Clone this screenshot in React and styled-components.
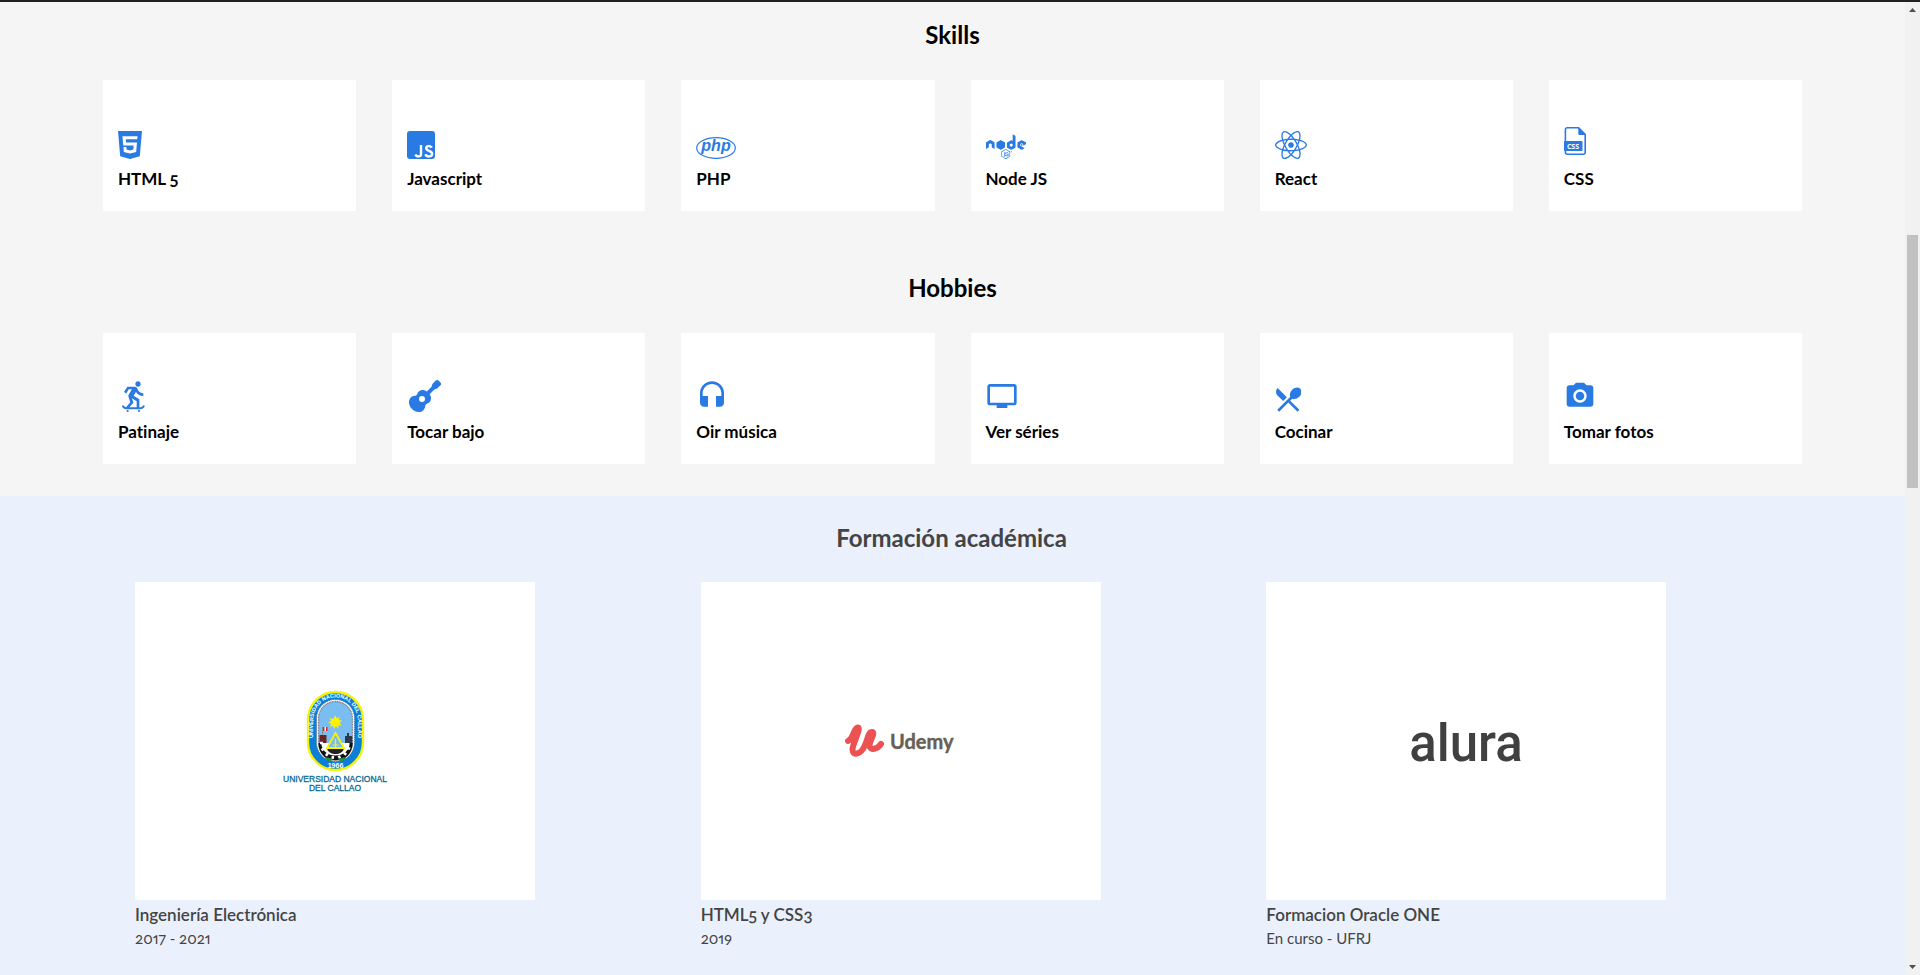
import React from "react";
import styled, { createGlobalStyle } from "styled-components";
import { FaNode, FaReact, FaGuitar } from "react-icons/fa";
import { MdSkateboarding, MdHeadset, MdPersonalVideo, MdRestaurantMenu, MdPhotoCamera } from "react-icons/md";

const BLUE = "#2a7ae4";

const GlobalStyle = createGlobalStyle`
  *, *::before, *::after { box-sizing: border-box; }
  body {
    margin: 0;
    font-family: Lato, "Open Sans", sans-serif;
    font-variant-numeric: oldstyle-nums proportional-nums;
    font-variant-ligatures: none;
    color: #000;
    background: #eaf1fd;
  }
  h2, h3, p, ul { margin: 0; padding: 0; }
  ul { list-style: none; }
`;

const Page = styled.div`
  display: flex;
  flex-direction: column;
  min-height: 100vh;
  border-top: 2px solid #231f20;
`;

const Viewport = styled.div`
  flex: 1;
  display: grid;
  grid-template-columns: minmax(0, 1fr) 15px;
`;

const Main = styled.main`
  display: flex;
  flex-direction: column;
`;

const Interests = styled.div`
  display: flex;
  flex-direction: column;
  gap: 60px;
  padding: 16px 103px 32px;
  background: #f5f5f5;
`;

const Title = styled.h2`
  margin-bottom: ${(p) => p.$gap}px;
  font-size: 24px;
  line-height: 34px;
  font-weight: 700;
  text-align: center;
`;

const TileGrid = styled.ul`
  display: grid;
  grid-template-columns: repeat(6, minmax(0, 1fr));
  gap: 36px;
`;

const Tile = styled.li`
  display: flex;
  flex-direction: column;
  justify-content: flex-end;
  align-items: flex-start;
  gap: 10px;
  height: 131px;
  padding: 0 14px 22px 15px;
  background: #fff;
  color: ${BLUE};

  svg { display: block; }
`;

const TileName = styled.h3`
  font-size: 17px;
  line-height: 20px;
  font-weight: 700;
  color: #000;
`;

const Education = styled.section`
  flex: 1;
  padding: 25px 105px 29px 103px;
  background: #eaf1fd;
  color: #444;
`;

const CourseGrid = styled.ul`
  display: grid;
  grid-template-columns: repeat(3, minmax(0, 1fr));
`;

const Course = styled.li`
  display: flex;
  flex-direction: column;
  padding-left: 32px;
`;

const LogoPanel = styled.div`
  display: flex;
  align-items: center;
  justify-content: center;
  width: 100%;
  max-width: 400px;
  height: 318px;
  background: #fff;
`;

const CourseName = styled.h3`
  font-size: 17px;
  line-height: 30px;
  font-weight: 600;
`;

const CourseDate = styled.p`
  font-size: 15px;
  line-height: 16px;
`;

const ScrollRail = styled.aside`
  position: sticky;
  top: 0;
  display: flex;
  flex-direction: column;
  height: calc(100vh - 2px);
  background: #f1f1f1;
`;

const ScrollArrow = styled.button`
  display: flex;
  align-items: center;
  justify-content: center;
  height: 16px;
  padding: 0;
  border: 0;
  background: none;
  color: #505050;
`;

const ScrollTrack = styled.div`
  flex: 1;
  display: grid;
  grid-template-rows: 217fr 253fr 471fr;
  padding: 0 2px;
`;

const ScrollThumb = styled.div`
  grid-row: 2;
  background: #c1c1c1;
`;

const Html5Icon = () => (
  <svg width="24" height="28" viewBox="1.5 0 21 24" preserveAspectRatio="none" fill="currentColor" aria-hidden="true">
    <path d="M1.5 0h21l-1.91 21.563L11.977 24l-8.564-2.438L1.5 0zm7.031 9.75l-.232-2.718 10.059.003.23-2.622L5.412 4.41l.698 8.01h9.126l-.326 3.426-2.91.804-2.955-.81-.188-2.11H6.248l.33 4.171L12 19.351l5.379-1.443.744-8.157H8.531z" />
  </svg>
);

const JsIcon = () => (
  <svg width="28" height="28" viewBox="0 0 28 28" aria-hidden="true">
    <rect width="28" height="28" rx="3" fill="currentColor" />
    <g fill="none" stroke="#fff" strokeWidth="2.4">
      <path d="M14 14v9.2c0 2.6-4.4 3.2-5.6.3" />
      <path d="M24.8 16.6c-1.3-2.2-5.6-2-5.6.7 0 3 6 2 6 5.5 0 3.2-5.4 3.6-7 .6" />
    </g>
  </svg>
);

const PhpIcon = () => (
  <svg width="40" height="22" viewBox="0 0 40 22" aria-hidden="true">
    <ellipse cx="20" cy="11" rx="19.3" ry="10.3" fill="none" stroke="currentColor" strokeWidth="1.2" />
    <text x="20" y="14" textAnchor="middle" fill="currentColor" fontFamily="Liberation Sans, sans-serif" fontSize="16" fontWeight="700" fontStyle="italic">php</text>
  </svg>
);

const CssFileIcon = () => (
  <svg width="22" height="32" viewBox="0 0 22 32" aria-hidden="true">
    <path d="M3.2.8h11.300L21.200 7.500v17.900a1.800 1.800 0 0 1-1.800 1.800H3.200a1.800 1.800 0 0 1-1.800-1.800V2.600A1.800 1.800 0 0 1 3.200.8z" fill="none" stroke="currentColor" strokeWidth="1.6" />
    <path d="M14.300.8h1L21.500 7v1h-5.700a1.500 1.500 0 0 1-1.500-1.500z" fill="currentColor" />
    <rect y="14" width="18.500" height="10" rx="1" fill="currentColor" />
    <text x="9" y="21.500" textAnchor="middle" fill="#fff" fontFamily="Open Sans, sans-serif" fontSize="7" fontWeight="700">CSS</text>
  </svg>
);

const sealTeeth = [15, 42, 69, 96, 123, 150, 177];

const CallaoLogo = () => (
  <svg width="112" height="104" viewBox="0 0 112 104" role="img" aria-label="Universidad Nacional del Callao">
    <defs>
      <path id="seal-arc" d="M34.500 61V30.500a22 22 0 0 1 44 0V61" />
      <clipPath id="seal-sky"><rect x="39.500" y="12" width="34" height="60" rx="17" /></clipPath>
    </defs>
    <rect x="29" y="3" width="55" height="78" rx="27.500" fill="#0b7fd8" stroke="#f6f20a" strokeWidth="2.400" />
    <text fill="#fff" fontFamily="Liberation Sans, sans-serif" fontSize="5.500" fontWeight="700">
      <textPath href="#seal-arc" startOffset="50%" textAnchor="middle">UNIVERSIDAD NACIONAL DEL CALLAO</textPath>
    </text>
    <text x="56.500" y="79" textAnchor="middle" fill="#fff" fontFamily="Liberation Sans, sans-serif" fontSize="7" fontWeight="700">1966</text>
    <rect x="37.500" y="10.500" width="38" height="62" rx="19" fill="#fff" stroke="#5d6f86" strokeWidth="1" strokeDasharray="1 1" />
    <rect x="39.500" y="12.500" width="34" height="58" rx="17" fill="#79bdf3" stroke="#8a7b86" strokeWidth="1.400" strokeDasharray="1 .6" />
    <g clipPath="url(#seal-sky)">
      <rect x="38" y="59" width="37" height="14" fill="#fff" />
      <path d="M40.500 46h7v13h-7z" fill="#6b2424" />
      <path d="M66 47h2v-3h2v3h3.500v12H66z" fill="#2e3946" />
      <path d="M43.500 38v8" stroke="#888" />
      <path d="M44 38h4v4h-4z" fill="#fff" />
      <path d="M44 38h1.500v4H44zM47 38h1.500v4H47z" fill="#d8202a" />
      <path d="M40 54v1a16.500 14 0 0 0 33 0v-1" fill="#fff" stroke="#111" strokeWidth="5" />
      {sealTeeth.map((angle) => (
        <rect key={angle} x="69" y="54.500" width="3" height="2.500" fill="#fff" transform={`rotate(${angle} 56.500 54.500)`} />
      ))}
      <path d="M48 59h17c-1 8-16 8-17 0z" fill="#222" />
    </g>
    <path d="M56.500 26.500l1.300 3 3-1.600-.9 3.200 3.300.7-2.700 2 2.200 2.600-3.400-.2.200 3.400-2.500-2.300-2.100 2.700-.9-3.300-3.200 1.100 1.500-3.100-3.200-1.100 3-1.500-1.600-3 3.300.9z" fill="#fff200" />
    <path d="M56.500 44l8.500 15H48z" fill="#79bdf3" stroke="#fff200" strokeWidth="1.800" />
    <path d="M56.500 50v8M53.500 56h6" stroke="#fff200" strokeWidth="1.200" />
    <path d="M46 69c3-1 6 0 8 2-3 2-6 1-8-2zM67 69c-3-1-6 0-8 2 3 2 6 1 8-2z" fill="#2c8a3d" />
    <g fill="#0d6c94" fontFamily="Liberation Sans, sans-serif" fontSize="8.500" textAnchor="middle" stroke="#0d6c94" strokeWidth=".3">
      <text x="56" y="93">UNIVERSIDAD NACIONAL</text>
      <text x="56" y="102">DEL CALLAO</text>
    </g>
  </svg>
);

const UdemyLogo = () => (
  <svg width="112" height="34" viewBox="0 0 112 34" role="img" aria-label="Udemy">
    <path d="M3 17C8 15 9 4 12.500 3.500 17 3 8 19 7.500 25c0 8 9 5 12.500-4 3-6 3-13 7-13 4 1-3 9-2.500 14 .8 5 8 3 11.500-2" fill="none" stroke="#ec5252" strokeWidth="6" strokeLinecap="round" strokeLinejoin="round" />
    <text x="45" y="25" fill="#685f58" stroke="#685f58" strokeWidth=".4" fontFamily="Lato, sans-serif" fontSize="20" fontWeight="700">Udemy</text>
  </svg>
);

const AluraLogo = () => (
  <svg width="120" height="72" viewBox="0 0 120 72" role="img" aria-label="Alura">
    <text x="60" y="56" textAnchor="middle" fill="#404041" fontFamily="Roboto, sans-serif" fontSize="51" fontWeight="500">alura</text>
  </svg>
);

const skills = [
  { name: "HTML 5", icon: <Html5Icon /> },
  { name: "Javascript", icon: <JsIcon /> },
  { name: "PHP", icon: <PhpIcon /> },
  { name: "Node JS", icon: <FaNode size={40} viewBox="0 -188 640 640" /> },
  { name: "React", icon: <FaReact size={32} viewBox="0 -32 512 512" /> },
  { name: "CSS", icon: <CssFileIcon /> },
];

const hobbies = [
  { name: "Patinaje", icon: <MdSkateboarding size={32} /> },
  { name: "Tocar bajo", icon: <FaGuitar size={34} viewBox="-32 -32 544 544" /> },
  { name: "Oir música", icon: <MdHeadset size={32} /> },
  { name: "Ver séries", icon: <MdPersonalVideo size={32} /> },
  { name: "Cocinar", icon: <MdRestaurantMenu size={26} viewBox="2 2 19.5 19.5" /> },
  { name: "Tomar fotos", icon: <MdPhotoCamera size={32} /> },
];

const courses = [
  { name: "Ingeniería Electrónica", date: "2017 - 2021", logo: <CallaoLogo /> },
  { name: "HTML5 y CSS3", date: "2019", logo: <UdemyLogo /> },
  { name: "Formacion Oracle ONE", date: "En curso - UFRJ", logo: <AluraLogo /> },
];

const TileSection = ({ title, items }) => (
  <section>
    <Title $gap={28}>{title}</Title>
    <TileGrid>
      {items.map((item) => (
        <Tile key={item.name}>
          {item.icon}
          <TileName>{item.name}</TileName>
        </Tile>
      ))}
    </TileGrid>
  </section>
);

export default function App() {
  return (
    <>
      <GlobalStyle />
      <Page>
        <Viewport>
          <Main>
            <Interests>
              <TileSection title="Skills" items={skills} />
              <TileSection title="Hobbies" items={hobbies} />
            </Interests>
            <Education>
              <Title $gap={27}>Formación académica</Title>
              <CourseGrid>
                {courses.map((course) => (
                  <Course key={course.name}>
                    <LogoPanel>{course.logo}</LogoPanel>
                    <CourseName>{course.name}</CourseName>
                    <CourseDate>{course.date}</CourseDate>
                  </Course>
                ))}
              </CourseGrid>
            </Education>
          </Main>
          <ScrollRail>
            <ScrollArrow type="button" aria-label="Subir">
              <svg width="7" height="4" viewBox="0 0 7 4" fill="currentColor"><path d="M3.500 0L7 4H0z" /></svg>
            </ScrollArrow>
            <ScrollTrack><ScrollThumb /></ScrollTrack>
            <ScrollArrow type="button" aria-label="Bajar">
              <svg width="7" height="4" viewBox="0 0 7 4" fill="currentColor"><path d="M0 0h7L3.500 4z" /></svg>
            </ScrollArrow>
          </ScrollRail>
        </Viewport>
      </Page>
    </>
  );
}
